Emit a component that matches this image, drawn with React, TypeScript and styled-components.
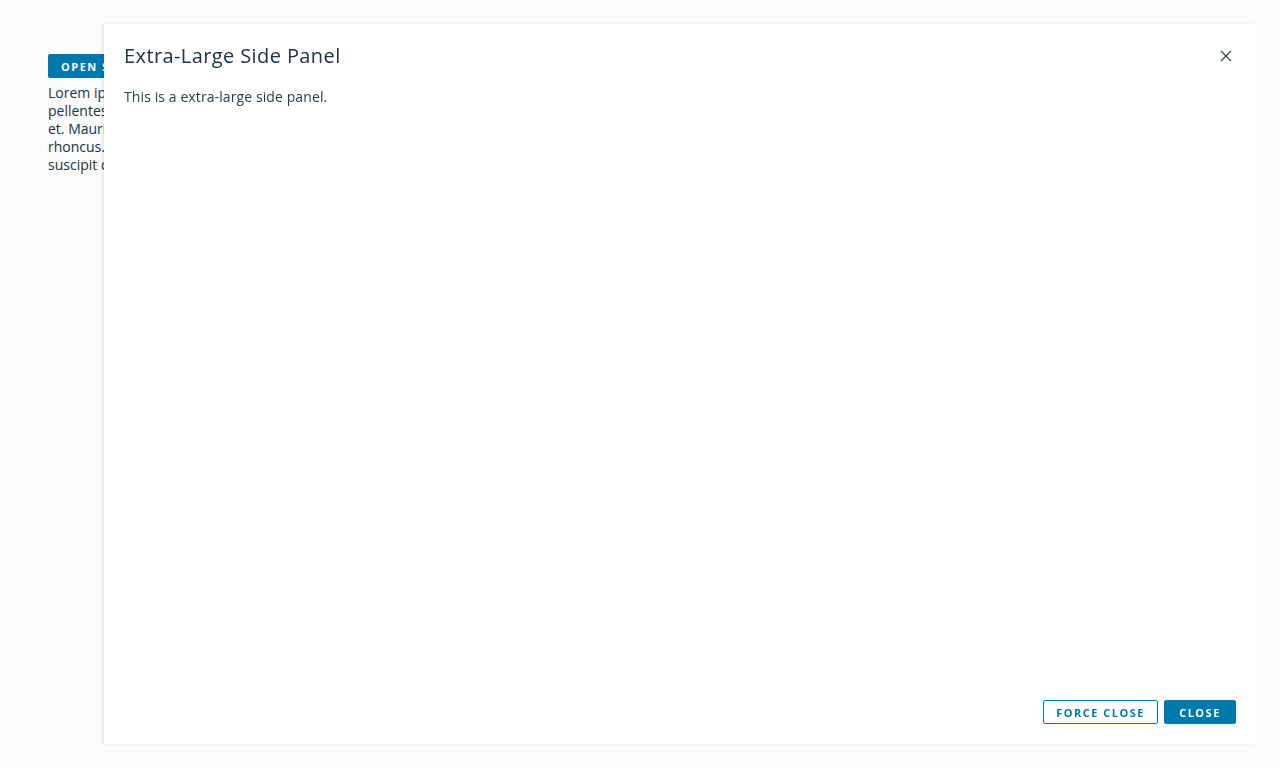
import styled, { createGlobalStyle } from "styled-components";

const GlobalStyle = createGlobalStyle`
    html, body {
        margin: 0;
        padding: 0;
        background: #ffffff;
        font-family: "Open Sans", "Liberation Sans", sans-serif;
        color: #21333b;
    }
    * { box-sizing: border-box; }
`

const Page = styled.div`
    min-height: 768px;
    padding: 54px 48px;
    display: flex;
    flex-direction: column;
    align-items: flex-start;
    gap: 6px;
`

const Button = styled.button<{ $outline?: boolean }>`
    height: 24px;
    min-width: 72px;
    padding: 0 12px;
    border-radius: 2px;
    border: 1px solid #0079ad;
    background: ${p => (p.$outline ? "#ffffff" : "#0079ad")};
    color: ${p => (p.$outline ? "#0079ad" : "#ffffff")};
    font-family: "Open Sans", "Liberation Sans", sans-serif;
    font-size: 11px;
    font-weight: 700;
    letter-spacing: 1.5px;
    text-transform: uppercase;
    white-space: nowrap;
    cursor: pointer;
`

const Lorem = styled.p`
    margin: 0;
    font-size: 14px;
    line-height: 18px;
    color: #21333b;
    white-space: nowrap;
`

const Backdrop = styled.div`
    position: fixed;
    inset: 0;
    background: rgba(0, 80, 80, 0.02);
`

const Panel = styled.div`
    position: fixed;
    top: 24px;
    right: 24px;
    bottom: 24px;
    left: 104px;
    background: #ffffff;
    box-shadow: -2px 0 3px rgba(0, 0, 0, 0.08);
    display: flex;
    flex-direction: column;
    padding: 20px;
`

const Header = styled.div`
    display: flex;
    align-items: center;
    justify-content: space-between;
    height: 24px;
`

const Title = styled.h3`
    margin: 0;
    font-size: 20px;
    font-weight: 400;
    line-height: 24px;
    letter-spacing: 0.4px;
    color: #21333b;
`

const CloseX = styled.button`
    width: 20px;
    height: 24px;
    padding: 0;
    border: none;
    background: transparent;
    display: flex;
    align-items: center;
    justify-content: center;
    cursor: pointer;
`

const Body = styled.div`
    flex: 1;
    padding-top: 19px;
    font-size: 14px;
    line-height: 20px;
    letter-spacing: 0.1px;
    color: #2e3d44;
`

const Footer = styled.div`
    display: flex;
    justify-content: flex-end;
    gap: 6px;
`

export default function App() {
    return (
        <>
            <GlobalStyle />
            <Page>
                <Button>Open Side Panel</Button>
                <Lorem>
                    Lorem ipsum dolor sit amet, consectetur adipiscing elit. Nulla a
                    <br />
                    pellentesque augue. Sed sed augue tellus. Sed faucibus ligula vel mi
                    <br />
                    et. Mauris at dui vitae metus ullamcorper tincidunt sit amet in
                    <br />
                    rhoncus. Vestibulum ante ipsum primis in faucibus orci luctus et
                    <br />
                    suscipit quis lorem.
                </Lorem>
            </Page>
            <Backdrop />
            <Panel>
                <Header>
                    <Title>Extra-Large Side Panel</Title>
                    <CloseX aria-label="close">
                        <svg width="12" height="12" viewBox="0 0 12 12">
                            <path d="M1 1 L11 11 M11 1 L1 11" stroke="#3a4d56" strokeWidth="1.4" fill="none" />
                        </svg>
                    </CloseX>
                </Header>
                <Body>This is a extra-large side panel.</Body>
                <Footer>
                    <Button $outline>Force Close</Button>
                    <Button>Close</Button>
                </Footer>
            </Panel>
        </>
    )
}
